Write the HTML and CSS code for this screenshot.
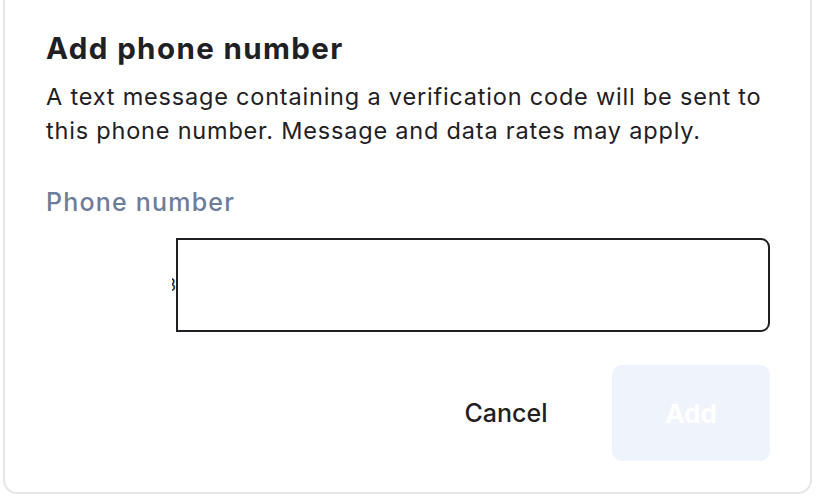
FILE: index.html
```html
<!DOCTYPE html>
<html lang="en">
<head>
<meta charset="utf-8">
<title>Add phone number</title>
<link rel="stylesheet" href="styles.css">
</head>
<body>
<div class="card">
  <h1 class="title">Add phone number</h1>
  <p class="desc">A text message containing a verification code will be sent to this phone number. Message and data rates may apply.</p>
  <label class="label" for="phone">Phone number</label>
  <div class="phone-row">
    <div class="country"><span class="country-clip">3</span></div>
    <input class="phone-input" id="phone" type="tel">
  </div>
  <div class="actions">
    <button class="btn btn-cancel" type="button">Cancel</button>
    <button class="btn btn-add" type="button" disabled>Add</button>
  </div>
</div>
</body>
</html>
```
FILE: styles.css
```css
* { box-sizing: border-box; }
html, body { margin: 0; padding: 0; background: #ffffff; }
body {
  width: 824px;
  height: 504px;
  overflow: hidden;
  font-family: Inter, "Liberation Sans", sans-serif;
  color: #1f2024;
}
.card {
  margin: -20px 0 0 3px;
  width: 809px;
  height: 514px;
  border: 2px solid #e6e6e6;
  border-radius: 14px;
  padding: 48px 40px 0 41px;
  display: flex;
  flex-direction: column;
}
.title {
  margin: 0;
  font-size: 29.5px;
  line-height: 36px;
  letter-spacing: 1.4px;
  font-weight: 700;
  color: #1f2024;
}
.desc {
  margin: 14px 0 0 0;
  max-width: 735px;
  font-size: 23.5px;
  line-height: 34px;
  letter-spacing: 0.8px;
  color: #1f2024;
}
.label {
  margin-top: 39px;
  font-size: 25px;
  line-height: 30px;
  letter-spacing: 1.2px;
  color: #6e7d99;
  font-weight: 500;
}
.phone-row {
  margin-top: 21px;
  display: flex;
  align-items: center;
}
.country {
  width: 130px;
  display: flex;
  justify-content: flex-end;
}
.country-clip {
  width: 4px;
  overflow: hidden;
  direction: rtl;
  font-size: 17px;
  line-height: 20px;
  white-space: nowrap;
  color: #1f2024;
}
.phone-input {
  width: 594px;
  height: 94px;
  border: 2px solid #1f2024;
  border-radius: 0 9px 9px 0;
  outline: none;
  background: #ffffff;
  font: inherit;
}
.actions {
  margin-top: 33px;
  display: flex;
  justify-content: flex-end;
  align-items: center;
  gap: 18px;
}
.btn {
  font-family: Inter, "Liberation Sans", sans-serif;
  border: none;
  background: none;
  cursor: pointer;
}
.btn-cancel {
  width: 176px;
  height: 96px;
  font-size: 25px;
  color: #1f2024;
  font-weight: 500;
}
.btn-add {
  width: 158px;
  height: 96px;
  border-radius: 10px;
  background: #eef3fc;
  color: #ffffff;
  font-size: 26px;
  font-weight: 700;
}
```
